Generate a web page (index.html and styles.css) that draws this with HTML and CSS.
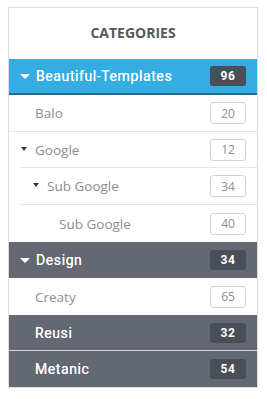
FILE: index.html
```html
<!DOCTYPE html>
<html>
<head>
<meta charset="utf-8">
<link rel="stylesheet" href="styles.css">
</head>
<body>
<div class="widget">
  <div class="title">CATEGORIES</div>
  <ul class="list">
    <li class="row active open">
      <span class="caret big"></span><span class="name">Beautiful-Templates</span><span class="badge dark">96</span>
    </li>
    <li class="row light"><span class="name">Balo</span><span class="badge">20</span></li>
    <li class="row light"><span class="caret small"></span><span class="name">Google</span><span class="badge">12</span></li>
    <li class="sub">
      <div class="row light lvl2"><span class="caret small"></span><span class="name">Sub Google</span><span class="badge">34</span></div>
      <div class="row light lvl3"><span class="name">Sub Google</span><span class="badge">40</span></div>
    </li>
    <li class="row dark-row"><span class="caret big"></span><span class="name">Design</span><span class="badge dark">34</span></li>
    <li class="row light creaty"><span class="name">Creaty</span><span class="badge">65</span></li>
    <li class="row dark-row sep"><span class="name">Reusi</span><span class="badge dark">32</span></li>
    <li class="row dark-row"><span class="name">Metanic</span><span class="badge dark">54</span></li>
  </ul>
</div>
</body>
</html>
```

FILE: styles.css
```css
* { box-sizing: border-box; }
html, body { margin: 0; padding: 0; background: #fff; }
body { padding: 7px 9px 0 8px; }

.widget {
  border: 1px solid #dcdcdc;
  width: 250px;
  background: #fff;
}

.title {
  height: 51px;
  display: flex;
  align-items: center;
  justify-content: center;
  font-family: "Open Sans", sans-serif;
  font-weight: 700;
  font-size: 14px;
  color: #55585e;
  padding-bottom: 2px;
}

.list { list-style: none; margin: 0; padding: 0; }

.row {
  display: flex;
  align-items: center;
  height: 36px;
  padding: 0 11px 0 26px;
  position: relative;
}
.row .name { flex: 1; }

.light {
  border-top: 1px solid #e6e6e6;
  font-family: "Open Sans", sans-serif;
  font-size: 13.5px;
  color: #8a8d93;
}
.list > .light:first-of-type { border-top: none; }

.active {
  background: #36ade2;
  border-bottom: 2px solid #1e6f97;
  height: 36px;
  padding-left: 11px;
}
.active + .light { border-top: none; }

.active .name, .dark-row .name {
  font-family: Roboto, sans-serif;
  font-weight: 400;
  font-size: 14px;
  letter-spacing: 0.6px;
  color: #fff;
  text-shadow: 0 0 0.3px #fff;
}

.dark-row {
  background: #636873;
  padding-left: 11px;
}
.dark-row:not(:has(.caret)) { padding-left: 26px; }
.dark-row.sep { border-bottom: 1px solid #d4d6da; }

.caret.big {
  width: 0; height: 0;
  border-left: 5px solid transparent;
  border-right: 5px solid transparent;
  border-top: 5px solid #fff;
  margin-right: 6px;
  margin-top: 1px;
}
.caret.small {
  width: 0; height: 0;
  border-left: 3px solid transparent;
  border-right: 3px solid transparent;
  border-top: 4px solid #2f343b;
  margin-right: 8px;
  margin-top: -2px;
}
.row.light:has(.caret) { padding-left: 12px; }

.sub { margin-left: 12px; }
.sub .row { padding-right: 11px; }
.lvl2 { height: 37px; }
.row.light.lvl2:has(.caret) { padding-left: 12px; }
.lvl3 { padding-left: 38px; height: 38px; }

.creaty { border-top: none; height: 37px; }

.badge {
  width: 36px;
  height: 22px;
  border: 1px solid #d0d2d5;
  border-radius: 3px;
  display: flex;
  align-items: center;
  justify-content: center;
  font-family: "Open Sans", sans-serif;
  font-size: 12px;
  color: #8a8d93;
  background: #fff;
}
.badge.dark {
  height: 20px;
  border: none;
  background: #4a4e57;
  color: #fff;
  font-family: Roboto, sans-serif;
  font-weight: 700;
  font-size: 12px;
  letter-spacing: 0.5px;
}
```
